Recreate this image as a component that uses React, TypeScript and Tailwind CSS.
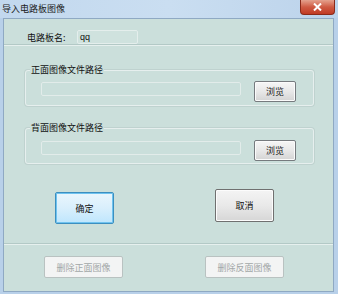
import React from "react";

const font = { fontFamily: '"Noto Sans CJK SC", "Noto Sans", sans-serif' };

function Browse() {
  return (
    <button className="w-[42px] h-[21px] rounded-[2px] border border-[#767a7e] bg-gradient-to-b from-[#f6f6f6] via-[#e8e8e8] to-[#d4d4d4] text-[9px] leading-none text-[#1a1a1a] shadow-[inset_0_0_0_1px_#fbfbfb]">
      浏览
    </button>
  );
}

function Group({ label, pt }: { label: string; pt: string }) {
  return (
    <div className={`relative ml-[21px] w-[289px] h-[36px] rounded-[3px] border border-[#e6efee] shadow-[0_0_0_1px_#bfd2cf] flex items-center ${pt}`}>
      <span className="absolute left-[4px] -top-[7px] px-[1px] bg-[#cbdfdb] text-[9px] leading-[12px] text-[#101010]">{label}</span>
      <div className="ml-[15px] h-[14px] w-[200px] rounded-[2px] border border-[#e2ecea] bg-[#cadfdb]" />
      <div className="ml-[13px]">
        <Browse />
      </div>
    </div>
  );
}

export default function App() {
  return (
    <div className="w-[338px] h-[294px] bg-[#b8d0e9] flex flex-col overflow-hidden" style={font}>
      <div className="h-[18px] flex items-start bg-gradient-to-r from-[#c2d8ee] via-[#cadef1] to-[#bcd3eb]">
        <span className="ml-[2px] mt-[3px] text-[9px] leading-[12px] text-[#1c1c1c]">导入电路板图像</span>
        <div className="ml-auto mr-[3px] w-[35px] h-[15px] rounded-b-[4px] border border-t-0 border-[#8a2a1a] bg-gradient-to-b from-[#e4a18e] via-[#cf5a43] to-[#c03a24] flex items-center justify-center">
          <svg width="9" height="8" viewBox="0 0 9 8">
            <path d="M1 0.5 L8 7.5 M8 0.5 L1 7.5" stroke="#ffffff" strokeWidth="2" />
          </svg>
        </div>
      </div>
      <div className="ml-[3px] mr-[4px] h-[274px] border border-[#8fa9c3] bg-[#cbdfdb] flex flex-col">
        <div className="mt-[11px] h-[14px] flex items-center">
          <span className="ml-[23px] w-[50px] text-[9px] leading-none text-[#101010]">电路板名:</span>
          <div className="h-[14px] w-[61px] rounded-[2px] border border-[#e4eeec] bg-[#cfe2de] flex items-center pl-[2px]">
            <span className="text-[9px] leading-none text-[#101010]" style={{ fontFamily: '"Liberation Sans", sans-serif' }}>qq</span>
          </div>
        </div>
        <div className="h-[2px] border-t border-[#b3c9c6] border-b border-b-[#e6f0ee]" />
        <div className="mt-[24px]">
          <Group label="正面图像文件路径" pt="pt-[1px]" />
        </div>
        <div className="mt-[22px]">
          <Group label="背面图像文件路径" pt="pt-[3px]" />
        </div>
        <div className="mt-[25px] flex items-start">
          <button className="ml-[51px] mt-[3px] w-[59px] h-[32px] rounded-[2px] border border-[#3c8fc0] bg-gradient-to-b from-[#eaf6fd] via-[#d9effc] to-[#bee6fd] shadow-[inset_0_0_0_1px_#6fc3ef] text-[9px] leading-none text-[#101010]">
            确定
          </button>
          <button className="ml-[101px] w-[59px] h-[33px] rounded-[2px] border border-[#707070] bg-gradient-to-b from-[#f4f4f4] via-[#e9e9e9] to-[#d6d6d6] shadow-[inset_0_0_0_1px_#fcfcfc] text-[9px] leading-none text-[#101010]">
            取消
          </button>
        </div>
        <div className="mt-[19px] h-[2px] border-t border-[#b3c9c6] border-b border-b-[#e6f0ee]" />
        <div className="mt-[11px] flex">
          <button className="ml-[40px] w-[79px] h-[22px] rounded-[2px] border border-[#b9c2c1] bg-[#f3f4f4] text-[9px] leading-none text-[#a2a7a7]">
            删除正面图像
          </button>
          <button className="ml-[82px] w-[79px] h-[22px] rounded-[2px] border border-[#b9c2c1] bg-[#f3f4f4] text-[9px] leading-none text-[#a2a7a7]">
            删除反面图像
          </button>
        </div>
      </div>
    </div>
  );
}
